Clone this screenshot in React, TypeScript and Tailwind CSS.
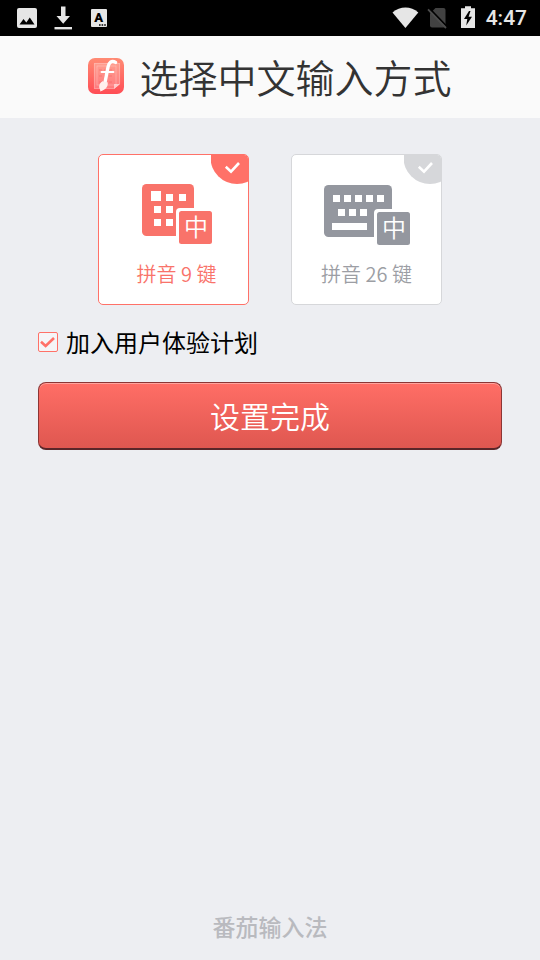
import { useState, type ReactNode } from "react";

type InputMode = "pinyin9" | "pinyin26";

export default function App() {
  const [mode, setMode] = useState<InputMode>("pinyin9");
  const [joined, setJoined] = useState(true);

  return (
    <div className="flex min-h-screen flex-col bg-[#edeef2] font-['Noto_Sans_CJK_SC',sans-serif]">
      <StatusBar />

      <header className="flex items-center justify-center gap-[15px] bg-[#fafafa] pt-[11px] pb-[13px]">
        <AppLogo />
        <h1 className="text-[39px] leading-[58px] font-[350] text-[#333333]">选择中文输入方式</h1>
      </header>

      <main className="flex flex-1 flex-col px-[38px] pt-9">
        <div role="radiogroup" aria-label="选择中文输入方式" className="flex justify-center gap-[42px]">
          <ModeCard
            label="拼音 9 键"
            checked={mode === "pinyin9"}
            onSelect={() => setMode("pinyin9")}
            className="pl-1.5"
          >
            <NineKeyIcon />
          </ModeCard>
          <ModeCard
            label="拼音 26 键"
            checked={mode === "pinyin26"}
            onSelect={() => setMode("pinyin26")}
          >
            <FullKeyIcon />
          </ModeCard>
        </div>

        <label className="mt-[21px] flex cursor-pointer items-center gap-2 self-start text-2xl text-black">
          <span className="grid size-5">
            <input
              type="checkbox"
              checked={joined}
              onChange={(e) => setJoined(e.target.checked)}
              className="col-start-1 row-start-1 size-5 appearance-none rounded-xs border border-[#ff7168] bg-[#f5f5f7]"
            />
            {joined && (
              <svg
                viewBox="0 0 20 20"
                fill="none"
                className="pointer-events-none col-start-1 row-start-1 size-5"
                aria-hidden="true"
              >
                <path d="M3 9.8 L7.6 14 L16 6" stroke="#ff7168" strokeWidth="2.6" />
              </svg>
            )}
          </span>
          加入用户体验计划
        </label>

        <button
          type="button"
          className="mt-6 h-[68px] rounded-lg border border-b-2 border-[#8c3535] border-b-[#5a2629] bg-linear-to-b from-[#ff6e66] to-[#df5750] text-[30px] font-[350] text-white shadow-[inset_0_1px_0_#ffa39d]"
        >
          设置完成
        </button>
      </main>

      <footer className="pb-4 text-center text-[23px] leading-9 font-medium text-[#b9babf]">
        番茄输入法
      </footer>
    </div>
  );
}

// 输入方式卡片
function ModeCard({
  label,
  checked,
  onSelect,
  className = "",
  children,
}: {
  label: string;
  checked: boolean;
  onSelect: () => void;
  className?: string;
  children: ReactNode;
}) {
  return (
    <label
      className={`relative flex h-[151px] w-[151px] cursor-pointer flex-col items-center overflow-hidden rounded-[5px] border bg-white pt-[29px] ${
        checked ? "border-[#ff7168] text-[#f9736a]" : "border-[#d6d7da] text-[#94979f]"
      } ${className}`}
    >
      <input
        type="radio"
        name="input-mode"
        checked={checked}
        onChange={onSelect}
        className="sr-only"
      />
      {children}
      <span className={`mt-[15px] text-xl font-[350] ${checked ? "" : "text-[#9c9ea4]"}`}>
        {label}
      </span>
      <svg
        viewBox="0 0 38 30"
        fill="none"
        className={`absolute -top-px -right-px h-[30px] w-[38px] ${
          checked ? "text-[#ff7168]" : "text-[#d6d7da]"
        }`}
        aria-hidden="true"
      >
        <circle cx="26" cy="3.5" r="26.5" fill="currentColor" />
        <path d="M14.8 12.8 L20 17.6 L28 9" stroke="#fff" strokeWidth="2.6" />
      </svg>
    </label>
  );
}

// 右下角的“中”字标记
function LanguageBadge({ x, y }: { x: number; y: number }) {
  return (
    <>
      <rect x={x - 3} y={y - 3} width="39" height="39" rx="4" fill="#fff" />
      <rect x={x} y={y} width="33" height="33" rx="2.5" fill="currentColor" />
      <text
        x={x + 17}
        y={y + 25}
        fontSize="24"
        textAnchor="middle"
        fill="#fff"
        className="font-[350]"
      >
        中
      </text>
    </>
  );
}

function NineKeyIcon() {
  return (
    <svg viewBox="0 0 70 61" className="h-[61px] w-[70px]" aria-hidden="true">
      <rect width="52" height="52" rx="4.5" fill="currentColor" />
      <g fill="#fff">
        <rect x="9" y="7" width="10" height="10" />
        <rect x="24" y="10" width="7" height="7" />
        <rect x="37" y="10" width="7" height="7" />
        <rect x="12" y="22" width="7" height="7" />
        <rect x="24" y="22" width="7" height="7" />
        <rect x="12" y="35" width="7" height="7" />
        <rect x="24" y="35" width="7" height="7" />
      </g>
      <LanguageBadge x={37} y={27} />
    </svg>
  );
}

function FullKeyIcon() {
  return (
    <svg viewBox="0 -1 86 61" className="h-[61px] w-[86px]" aria-hidden="true">
      <rect width="68" height="52" rx="4.5" fill="currentColor" />
      <g fill="#fff">
        {[9, 20, 31, 42, 53].map((x) => (
          <rect key={x} x={x} y="10" width="7" height="7" />
        ))}
        {[14, 25, 36].map((x) => (
          <rect key={x} x={x} y="24" width="7" height="7" />
        ))}
        <rect x="8" y="38" width="35" height="7" />
      </g>
      <LanguageBadge x={53} y={27} />
    </svg>
  );
}

function AppLogo() {
  return (
    <svg viewBox="0 0 36 36" className="size-9" aria-hidden="true">
      <defs>
        <linearGradient id="logo-bg" x1="0" y1="0" x2="0" y2="1">
          <stop offset="0" stopColor="#ff8b74" />
          <stop offset="1" stopColor="#ff4d55" />
        </linearGradient>
      </defs>
      <rect width="36" height="36" rx="7" fill="url(#logo-bg)" />
      {/* 稿纸 */}
      <path d="M6 5 H32 V26 L26 31 H6 Z" fill="#fff" fillOpacity="0.22" />
      <path d="M32 26 L26 31 V26 Z" fill="#fff" fillOpacity="0.55" />
      <g fill="none" stroke="#fff" strokeOpacity="0.3" strokeWidth="0.8">
        <path d="M6.4 5.4 H31.6 V26 L26 30.6 H6.4 Z" />
        <rect x="9" y="8" width="19" height="19" />
      </g>
      <path
        d="M11 12 H26 M11 18 H26 M11 24 H26"
        fill="none"
        stroke="#e84850"
        strokeOpacity="0.4"
        strokeWidth="0.9"
        strokeDasharray="3 2"
      />
      {/* 毛笔 */}
      <path
        d="M27.6 4.4 C23.5 1.8 20.8 4.6 20 9 L17.2 23.5"
        fill="none"
        stroke="#fff"
        strokeWidth="3.4"
        strokeLinecap="round"
      />
      <path d="M13.5 14 H25.5" stroke="#fff" strokeWidth="1.8" strokeLinecap="round" />
      <path
        d="M14.4 23.2 L19.6 24.2 C20.4 28 18.4 31.6 12 33.6 C13 31.8 11.2 31 11.2 28.4 C11.2 26 12.6 24.4 14.4 23.2 Z"
        fill="#fff0ed"
      />
    </svg>
  );
}

function StatusBar() {
  return (
    <div className="flex h-9 items-center justify-between bg-black pr-[13px] pl-4 text-[#e6e6e6]">
      <div className="flex items-center gap-4">
        <svg viewBox="0 0 22 24" className="h-6 w-[22px]" aria-hidden="true">
          <rect x="1" y="2" width="20" height="20" rx="2" fill="currentColor" />
          <path d="M3.5 18.5 L7.5 13 L10.3 16.4 L13.8 11.6 L18.5 18.5 Z" fill="#000" />
        </svg>
        <svg viewBox="0 0 18 24" className="h-6 w-[18px]" aria-hidden="true">
          <path d="M7 0.5 H11.5 V10 H16 L9.2 17.8 L2.5 10 H7 Z" fill="currentColor" />
          <rect x="0.5" y="21" width="17.5" height="2.4" fill="currentColor" />
        </svg>
        <svg viewBox="0 0 22 24" className="h-6 w-[22px]" aria-hidden="true">
          <rect x="3" y="3" width="16" height="18" rx="1" fill="currentColor" />
          <text
            x="10.8"
            y="16"
            fontSize="13"
            textAnchor="middle"
            fill="#000"
            className="font-['Roboto',sans-serif] font-black"
          >
            A
          </text>
          <path d="M11 19 H18" stroke="#000" strokeWidth="1.6" strokeDasharray="1.6 1" />
        </svg>
      </div>

      <div className="flex items-center gap-2">
        <svg viewBox="1 0 27 24" className="h-6 w-[27px] overflow-visible" aria-hidden="true">
          <path d="M0.5 6.4 C8 -0.2 19 -0.2 26.3 6.4 L13.4 22 Z" fill="currentColor" />
        </svg>
        <svg viewBox="1 0 22 24" className="h-6 w-[22px] overflow-visible" aria-hidden="true">
          <path
            d="M8.5 2 H16.5 Q18.5 2 18.5 4 V19.5 Q18.5 21.5 16.5 21.5 H5 Q3 21.5 3 19.5 V7.5 Z"
            fill="#424242"
          />
          <path d="M2.4 2.4 L20.4 21.2" stroke="#000" strokeWidth="1.8" />
          <path d="M1 3.4 L19 22" stroke="#4c4c4c" strokeWidth="1.8" />
        </svg>
        <svg viewBox="0 0 20 24" className="h-6 w-5" aria-hidden="true">
          <path d="M7 0.3 H13 V2.3 H17 V22 H3 V2.3 H7 Z" fill="currentColor" />
          <path d="M11 5 L6 13 H9.3 L8.2 19.5 L14 10.8 H10.6 L12.5 5 Z" fill="#000" />
        </svg>
        <span className="font-['Roboto',sans-serif] text-[21px] leading-6 font-medium">4:47</span>
      </div>
    </div>
  );
}
